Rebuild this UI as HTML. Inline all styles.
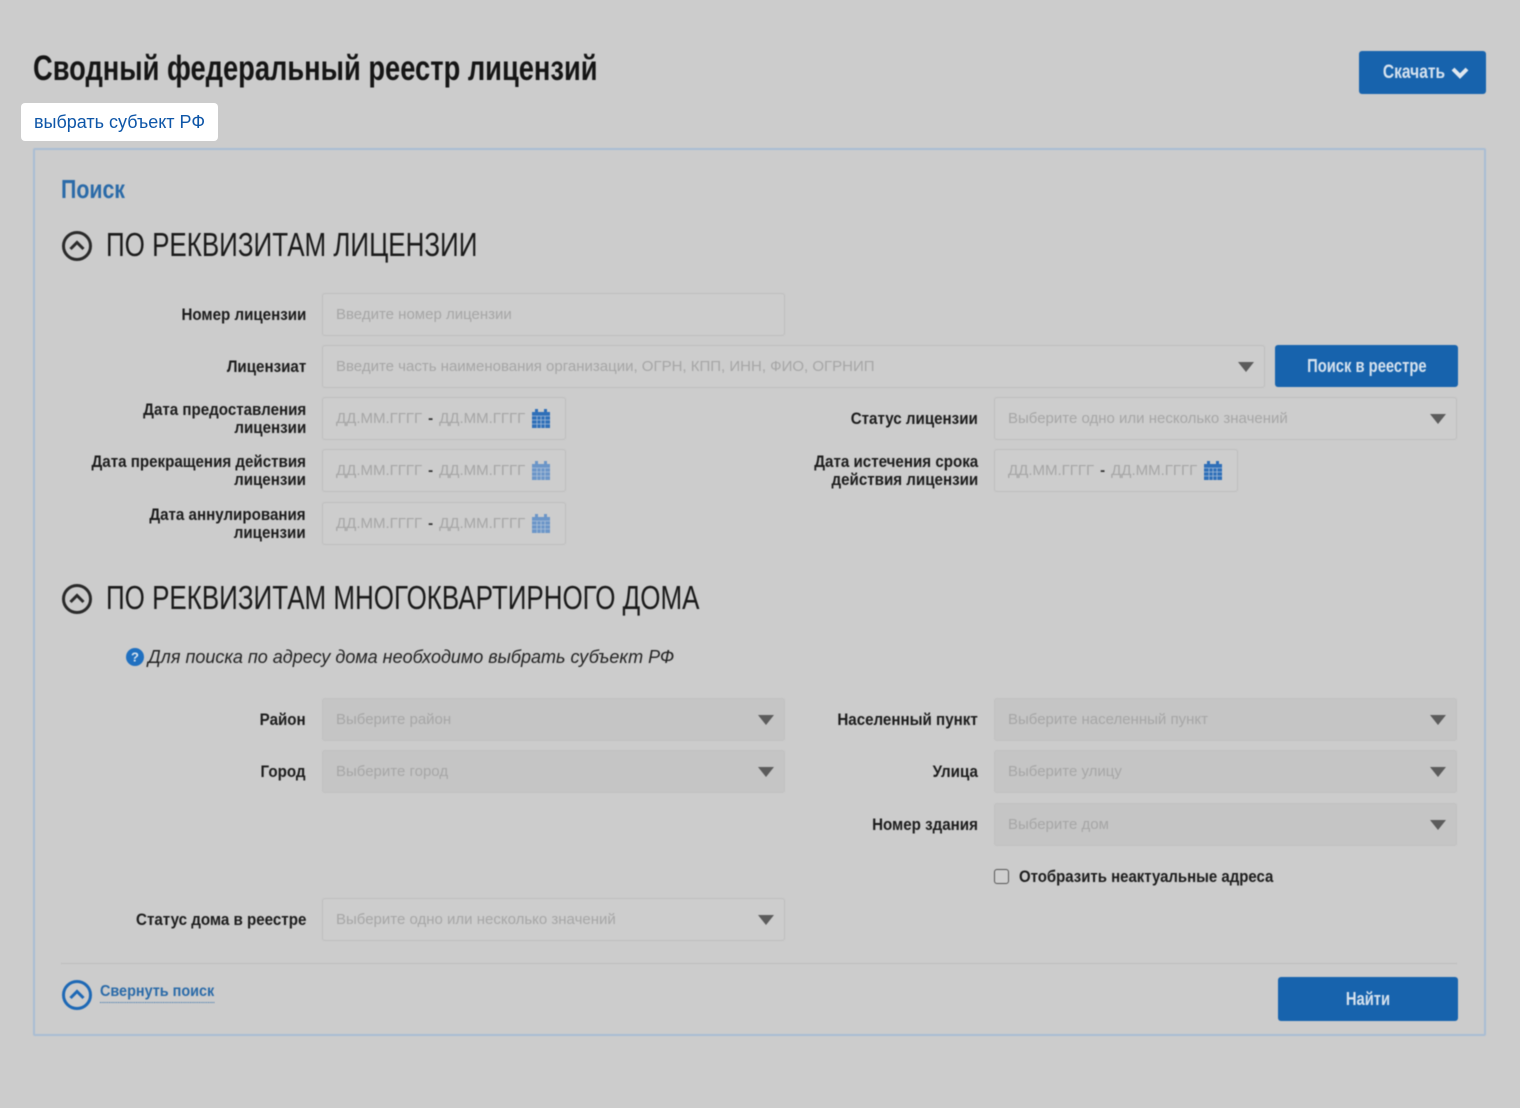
<!DOCTYPE html>
<html><head><meta charset="utf-8"><style>
*{box-sizing:border-box;margin:0;padding:0}
body{width:1520px;height:1108px;background:#cccccc;position:relative;overflow:hidden;font-family:"Liberation Sans",sans-serif}
#c{position:absolute;left:0;top:0;width:1520px;height:1108px;filter:blur(0.6px)}
.a{position:absolute}
.cond{font-family:"Liberation Sans",sans-serif;font-weight:bold;display:inline-block;white-space:nowrap}
.lbl{position:absolute;text-align:right;color:#1c1c1c;font-size:17px;line-height:18px;display:flex;align-items:center;justify-content:flex-end}
.lbl span{display:inline-block;white-space:nowrap;font-weight:bold;transform:scaleX(.89);transform-origin:right center;text-align:right}
.inp{position:absolute;border:1px solid #bdbdbd;border-radius:3px;background:#cdcdcd;font-family:"Liberation Sans",sans-serif;font-size:15px;color:#a6a6a6;padding-left:13px;display:flex;align-items:center;white-space:nowrap}
.dis{background:#c5c5c5;border-color:#c0c0c0}
.arr{position:absolute;right:10px;top:50%;margin-top:-5px;width:0;height:0;border-left:8px solid transparent;border-right:8px solid transparent;border-top:10px solid #5c5c5c}
.btn{position:absolute;background:#1763ad;border-radius:3px;color:#d6e2ee;font-size:19px;display:flex;align-items:center;justify-content:center}
.btn span{display:inline-block;font-weight:bold;transform:scaleX(.82);white-space:nowrap}
.hdr{position:absolute;font-size:33px;color:#1a1a1a;white-space:nowrap;transform:scaleX(.787);transform-origin:left center}
.cal{display:inline-block;width:20px;height:20px;margin-left:6px}
.dash{color:#333;margin:0 6px;font-weight:bold}
</style></head><body>
<div id="c">
<div class="a cond" style="left:33px;top:49px;font-size:35px;color:#151515;transform:scaleX(.78);transform-origin:left center">Сводный федеральный реестр лицензий</div>
<div class="btn" style="left:1359px;top:51px;width:127px;height:43px"><span>Скачать</span><svg width="18" height="14" viewBox="0 0 18 14"><path d="M2 3 L9 10 L16 3" stroke="#e0e8f0" stroke-width="4" fill="none"/></svg></div>

<div class="a" style="left:33px;top:148px;width:1453px;height:888px;border:2px solid #a9bdd3;border-radius:2px"></div>
<div class="a cond" style="left:61px;top:174px;font-size:26px;color:#2a6aa8;transform:scaleX(.82);transform-origin:left center">Поиск</div>

<svg class="a" style="left:61px;top:230px" width="32" height="32" viewBox="0 0 32 32"><circle cx="16" cy="16" r="13.5" stroke="#2a2a2a" stroke-width="3" fill="none"/><path d="M9.5 19 L16 12.5 L22.5 19" stroke="#2a2a2a" stroke-width="3" fill="none"/></svg>
<div class="hdr" style="left:106px;top:226px">ПО РЕКВИЗИТАМ ЛИЦЕНЗИИ</div>

<div class="lbl" style="left:20px;width:286px;top:293px;height:43px"><span>Номер лицензии</span></div>
<div class="inp" style="left:322px;top:293px;width:463px;height:43px">Введите номер лицензии</div>

<div class="lbl" style="left:20px;width:286px;top:345px;height:43px"><span>Лицензиат</span></div>
<div class="inp" style="left:322px;top:345px;width:943px;height:43px">Введите часть наименования организации, ОГРН, КПП, ИНН, ФИО, ОГРНИП<span class="arr"></span></div>
<div class="btn" style="left:1275px;top:345px;width:183px;height:42px;font-size:18px"><span>Поиск в реестре</span></div>

<div class="lbl" style="left:20px;width:286px;top:397px;height:43px"><span>Дата предоставления<br>лицензии</span></div>
<div class="inp" style="left:322px;top:397px;width:244px;height:43px">ДД.ММ.ГГГГ<span class="dash">-</span>ДД.ММ.ГГГГ<svg class="cal" viewBox="0 0 20 20"><rect x="1" y="3" width="18" height="16" fill="#2f6fb8"/><rect x="4" y="0" width="3" height="5" fill="#2f6fb8"/><rect x="13" y="0" width="3" height="5" fill="#2f6fb8"/><path d="M1 7H19M1 11H19M1 15H19M6 7V19M10 7V19M14 7V19" stroke="#9fb9d6" stroke-width="0.8"/></svg></div>

<div class="lbl" style="left:20px;width:286px;top:449px;height:43px"><span>Дата прекращения действия<br>лицензии</span></div>
<div class="inp" style="left:322px;top:449px;width:244px;height:43px">ДД.ММ.ГГГГ<span class="dash">-</span>ДД.ММ.ГГГГ<svg class="cal" viewBox="0 0 20 20"><rect x="1" y="3" width="18" height="16" fill="#6c96c8"/><rect x="4" y="0" width="3" height="5" fill="#6c96c8"/><rect x="13" y="0" width="3" height="5" fill="#6c96c8"/><path d="M1 7H19M1 11H19M1 15H19M6 7V19M10 7V19M14 7V19" stroke="#a9bfd8" stroke-width="0.8"/></svg></div>

<div class="lbl" style="left:20px;width:286px;top:502px;height:43px"><span>Дата аннулирования<br>лицензии</span></div>
<div class="inp" style="left:322px;top:502px;width:244px;height:43px">ДД.ММ.ГГГГ<span class="dash">-</span>ДД.ММ.ГГГГ<svg class="cal" viewBox="0 0 20 20"><rect x="1" y="3" width="18" height="16" fill="#6c96c8"/><rect x="4" y="0" width="3" height="5" fill="#6c96c8"/><rect x="13" y="0" width="3" height="5" fill="#6c96c8"/><path d="M1 7H19M1 11H19M1 15H19M6 7V19M10 7V19M14 7V19" stroke="#a9bfd8" stroke-width="0.8"/></svg></div>

<div class="lbl" style="left:700px;width:278px;top:397px;height:43px"><span>Статус лицензии</span></div>
<div class="inp" style="left:994px;top:397px;width:463px;height:43px">Выберите одно или несколько значений<span class="arr"></span></div>

<div class="lbl" style="left:700px;width:278px;top:449px;height:43px"><span>Дата истечения срока<br>действия лицензии</span></div>
<div class="inp" style="left:994px;top:449px;width:244px;height:43px">ДД.ММ.ГГГГ<span class="dash">-</span>ДД.ММ.ГГГГ<svg class="cal" viewBox="0 0 20 20"><rect x="1" y="3" width="18" height="16" fill="#2f6fb8"/><rect x="4" y="0" width="3" height="5" fill="#2f6fb8"/><rect x="13" y="0" width="3" height="5" fill="#2f6fb8"/><path d="M1 7H19M1 11H19M1 15H19M6 7V19M10 7V19M14 7V19" stroke="#9fb9d6" stroke-width="0.8"/></svg></div>

<svg class="a" style="left:61px;top:583px" width="32" height="32" viewBox="0 0 32 32"><circle cx="16" cy="16" r="13.5" stroke="#2a2a2a" stroke-width="3" fill="none"/><path d="M9.5 19 L16 12.5 L22.5 19" stroke="#2a2a2a" stroke-width="3" fill="none"/></svg>
<div class="hdr" style="left:106px;top:579px">ПО РЕКВИЗИТАМ МНОГОКВАРТИРНОГО ДОМА</div>

<svg class="a" style="left:126px;top:648px" width="18" height="18" viewBox="0 0 18 18"><circle cx="9" cy="9" r="9" fill="#2070c0"/><text x="9" y="13.5" font-size="13" font-weight="bold" fill="#d8e4f0" text-anchor="middle" font-family="Liberation Sans">?</text></svg>
<div class="a" style="left:148px;top:647px;font-family:'Liberation Sans',sans-serif;font-style:italic;font-size:18px;color:#222;white-space:nowrap">Для поиска по адресу дома необходимо выбрать субъект РФ</div>

<div class="lbl" style="left:20px;width:286px;top:698px;height:43px"><span>Район</span></div>
<div class="inp dis" style="left:322px;top:698px;width:463px;height:43px">Выберите район<span class="arr"></span></div>
<div class="lbl" style="left:20px;width:286px;top:750px;height:43px"><span>Город</span></div>
<div class="inp dis" style="left:322px;top:750px;width:463px;height:43px">Выберите город<span class="arr"></span></div>

<div class="lbl" style="left:700px;width:278px;top:698px;height:43px"><span>Населенный пункт</span></div>
<div class="inp dis" style="left:994px;top:698px;width:463px;height:43px">Выберите населенный пункт<span class="arr"></span></div>
<div class="lbl" style="left:700px;width:278px;top:750px;height:43px"><span>Улица</span></div>
<div class="inp dis" style="left:994px;top:750px;width:463px;height:43px">Выберите улицу<span class="arr"></span></div>
<div class="lbl" style="left:700px;width:278px;top:803px;height:43px"><span>Номер здания</span></div>
<div class="inp dis" style="left:994px;top:803px;width:463px;height:43px">Выберите дом<span class="arr"></span></div>

<div class="a" style="left:994px;top:869px;width:15px;height:15px;border:1.5px solid #555;border-radius:3px;background:#d0d0d0"></div>
<div class="a cond" style="left:1019px;top:867px;font-size:17px;color:#1c1c1c;transform:scaleX(.88);transform-origin:left center">Отобразить неактуальные адреса</div>

<div class="lbl" style="left:20px;width:286px;top:898px;height:43px"><span>Статус дома в реестре</span></div>
<div class="inp" style="left:322px;top:898px;width:463px;height:43px">Выберите одно или несколько значений<span class="arr"></span></div>

<div class="a" style="left:61px;top:963px;width:1396px;height:1px;background:#bcbcbc"></div>
<svg class="a" style="left:61px;top:979px" width="32" height="32" viewBox="0 0 32 32"><circle cx="16" cy="16" r="13.5" stroke="#1d68b5" stroke-width="3" fill="none"/><path d="M9.5 19 L16 12.5 L22.5 19" stroke="#1d68b5" stroke-width="3" fill="none"/></svg>
<div class="a cond" style="left:100px;top:983px;font-size:16px;color:#2a6aa8;border-bottom:1px dotted #2a6aa8;padding-bottom:1px;transform:scaleX(.9);transform-origin:left center">Свернуть поиск</div>
<div class="btn" style="left:1278px;top:977px;width:180px;height:44px;font-size:18px"><span>Найти</span></div>
</div>

<div class="a" style="left:21px;top:103px;width:197px;height:38px;background:#fff;border-radius:4px;font-family:'Liberation Sans',sans-serif;font-size:18px;color:#0e56a8;display:flex;align-items:center;justify-content:center">выбрать субъект РФ</div>
</body></html>
